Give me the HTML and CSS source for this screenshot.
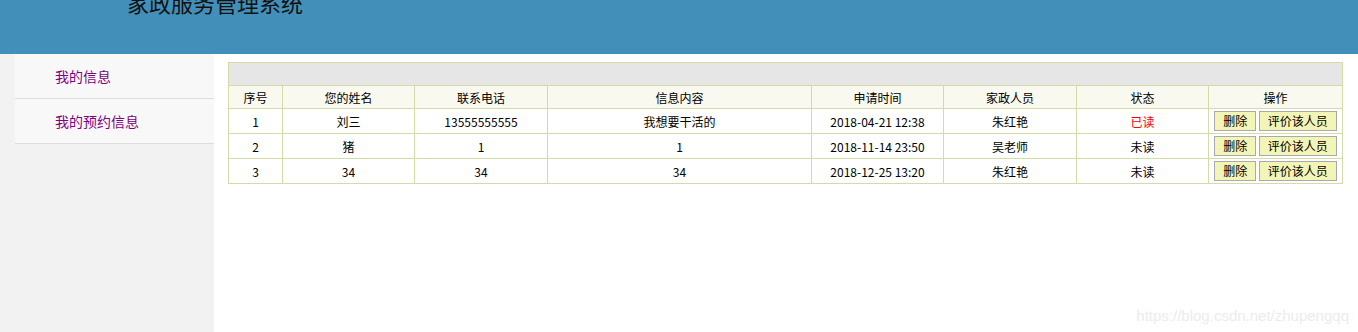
FILE: index.html
```html
<!DOCTYPE html>
<html lang="zh-CN">
<head>
    <meta charset="UTF-8">
    <meta name="viewport" content="width=device-width, initial-scale=1.0">
    <title>家政服务管理系统</title>
    <link rel="stylesheet" href="styles.css">
</head>
<body>
    <div class="header">
        <h1>家政服务管理系统</h1>
    </div>
    <div class="layout">
        <div class="sidebar">
            <ul class="menu">
                <li><a href="#">我的信息</a></li>
                <li><a href="#">我的预约信息</a></li>
            </ul>
        </div>
        <div class="main">
            <table class="list">
                <colgroup>
                    <col class="c-no"><col class="c-name"><col class="c-tel"><col class="c-info">
                    <col class="c-time"><col class="c-staff"><col class="c-state"><col class="c-op">
                </colgroup>
                <tr class="caption"><td colspan="8"></td></tr>
                <tr>
                    <th>序号</th><th>您的姓名</th><th>联系电话</th><th>信息内容</th>
                    <th>申请时间</th><th>家政人员</th><th>状态</th><th>操作</th>
                </tr>
                <tr>
                    <td>1</td><td>刘三</td><td>13555555555</td><td>我想要干活的</td>
                    <td>2018-04-21 12:38</td><td>朱红艳</td><td class="read">已读</td>
                    <td><button class="btn">删除</button> <button class="btn">评价该人员</button></td>
                </tr>
                <tr>
                    <td>2</td><td>猪</td><td>1</td><td>1</td>
                    <td>2018-11-14 23:50</td><td>吴老师</td><td>未读</td>
                    <td><button class="btn">删除</button> <button class="btn">评价该人员</button></td>
                </tr>
                <tr>
                    <td>3</td><td>34</td><td>34</td><td>34</td>
                    <td>2018-12-25 13:20</td><td>朱红艳</td><td>未读</td>
                    <td><button class="btn">删除</button> <button class="btn">评价该人员</button></td>
                </tr>
            </table>
        </div>
    </div>
    <div class="watermark">https://blog.csdn.net/zhupengqq</div>
</body>
</html>
```

FILE: styles.css
```css
* {
  box-sizing: border-box;
}
html, body {
  margin: 0;
  padding: 0;
  height: 100%;
}
body {
  font-family: "Noto Sans CJK SC", "DejaVu Sans", sans-serif;
  font-size: 12px;
  color: #000;
  background: #fff;
  overflow: hidden;
}

/* Header */
.header {
  height: 54px;
  background-color: #4290b9;
  overflow: hidden;
}
.header h1 {
  margin: -9px 0 0 0;
  padding-left: 127px;
  font-size: 22px;
  line-height: 22px;
  font-weight: normal;
  color: #111;
}

/* Layout */
.layout {
  display: flex;
  height: calc(100% - 54px);
}
.sidebar {
  width: 214px;
  flex-shrink: 0;
  padding-left: 15px;
  background-color: #f2f2f2;
}
.menu {
  list-style: none;
  margin: 0;
  padding: 0;
}
.menu li a {
  display: block;
  height: 45px;
  line-height: 45px;
  padding-left: 40px;
  background-color: #f8f8f8;
  border-bottom: 1px solid #dddddd;
  color: #800080;
  font-size: 14px;
  text-decoration: none;
}
.main {
  flex: 1;
  padding: 8px 16px 0 14px;
}

/* Table */
.list {
  width: 100%;
  border-collapse: collapse;
  border: 1px solid #d3dca8;
  table-layout: fixed;
}
.c-no { width: 54px; }
.c-name { width: 132px; }
.c-tel { width: 133px; }
.c-info { width: 264px; }
.c-time { width: 132px; }
.c-staff { width: 133px; }
.c-state { width: 132px; }
.c-op { width: 134px; }
.list th, .list td {
  border: 1px solid #d3dca8;
  text-align: center;
  padding: 0;
  font-weight: normal;
  font-size: 12px;
}
.list .caption td {
  height: 23px;
  background-color: #e6e6e6;
}
.list th {
  height: 23px;
  background-color: #f9f9f0;
}
.list td {
  height: 25px;
}
.read {
  color: #ff0000;
}
.btn {
  height: 20px;
  padding: 0 8px;
  margin: 0;
  font-family: inherit;
  font-size: 12px;
  line-height: 18px;
  color: #000;
  background-color: #f3f5b7;
  border: 1px solid #aaaaaa;
  border-radius: 0;
  vertical-align: middle;
}

/* Watermark */
.watermark {
  position: absolute;
  right: 9px;
  bottom: 8px;
  font-family: "Liberation Sans", Arial, sans-serif;
  font-size: 15px;
  color: #ececec;
}
```
